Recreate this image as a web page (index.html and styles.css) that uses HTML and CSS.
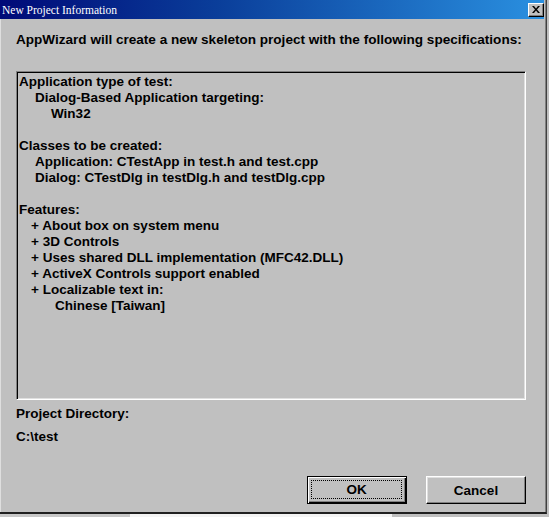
FILE: index.html
```html
<!DOCTYPE html>
<html>
<head>
<meta charset="utf-8">
<link rel="stylesheet" href="styles.css">
</head>
<body>
<div class="window">
  <div class="titlebar">
    <span class="title">New Project Information</span>
    <span class="close"><svg width="8" height="7" viewBox="0 0 8 7"><path d="M0 0h2l2 2.5L6 0h2L5 3.5 8 7H6L4 4.5 2 7H0l3-3.5z" fill="#000"/></svg></span>
  </div>
  <div class="content">
    <p class="heading">AppWizard will create a new skeleton project with the following specifications:</p>
    <div class="listbox">
      <div class="l0">Application type of test:</div>
      <div class="l1">Dialog-Based Application targeting:</div>
      <div class="l2">Win32</div>
      <div class="blank"></div>
      <div class="l0">Classes to be created:</div>
      <div class="l1">Application: CTestApp in test.h and test.cpp</div>
      <div class="l1">Dialog: CTestDlg in testDlg.h and testDlg.cpp</div>
      <div class="blank"></div>
      <div class="l0">Features:</div>
      <div class="lp">+ About box on system menu</div>
      <div class="lp">+ 3D Controls</div>
      <div class="lp">+ Uses shared DLL implementation (MFC42.DLL)</div>
      <div class="lp">+ ActiveX Controls support enabled</div>
      <div class="lp">+ Localizable text in:</div>
      <div class="l3">Chinese [Taiwan]</div>
    </div>
    <div class="label dir-label">Project Directory:</div>
    <div class="label dir-value">C:\test</div>
    <div class="buttons">
      <button class="btn default"><span class="focus">OK</span></button>
      <button class="btn">Cancel</button>
    </div>
  </div>
</div>
<div class="behind">
  <span class="b1"></span><span class="b2"></span><span class="b3"></span>
</div>
</body>
</html>
```

FILE: styles.css
```css
html, body {
  margin: 0;
  padding: 0;
  background: #c0c0c0;
  width: 549px;
  height: 517px;
  overflow: hidden;
}
.window {
  width: 546px;
  height: 512px;
  background: #c0c0c0;
  border-right: 1px solid #404040;
  border-bottom: 2px solid #202020;
  display: flex;
  flex-direction: column;
  box-shadow: inset -1px 0 0 #808080, inset 1px 0 0 #dfdfdf;
  font-family: "Liberation Sans", Arial, sans-serif;
  font-weight: bold;
  font-size: 13.5px;
  color: #000;
}
.titlebar {
  height: 19px;
  margin-right: 2px;
  display: flex;
  align-items: center;
  justify-content: space-between;
  padding: 0 0 0 2px;
  background: linear-gradient(to right, #000a78 0%, #0a3e9a 40%, #2a90e0 100%);
}
.title {
  font-family: "Liberation Serif", "Times New Roman", serif;
  font-weight: normal;
  font-size: 11.5px;
  color: #fff;
}
.close {
  width: 16px;
  height: 14px;
  box-sizing: border-box;
  background: #c0c0c0;
  border-top: 1px solid #fff;
  border-left: 1px solid #fff;
  border-right: 1px solid #000;
  border-bottom: 1px solid #000;
  box-shadow: inset -1px -1px 0 #808080;
  display: flex;
  align-items: center;
  justify-content: center;
}
.content {
  flex: 1;
  display: flex;
  flex-direction: column;
  padding: 0 18px 0 16px;
}
.heading {
  margin: 13px 0 0 0;
  line-height: 16px;
  font-size: 13.55px;
  white-space: nowrap;
}
.listbox {
  margin-top: 23px;
  width: 510px;
  height: 329px;
  box-sizing: border-box;
  border-top: 1px solid #808080;
  border-left: 1px solid #808080;
  border-right: 1px solid #fff;
  border-bottom: 1px solid #fff;
  box-shadow: inset 1px 1px 0 #000, inset -1px -1px 0 #dfdfdf;
  padding: 2px 2px 2px 2px;
  line-height: 16px;
}
.blank { height: 16px; }
.l1 { padding-left: 16px; }
.l2 { padding-left: 32px; }
.lp { padding-left: 12px; }
.l3 { padding-left: 36px; }
.label {
  line-height: 16px;
}
.dir-label { margin-top: 6px; }
.dir-value { margin-top: 7px; }
.buttons {
  margin-top: auto;
  margin-bottom: 8px;
  margin-right: 2px;
  display: flex;
  justify-content: flex-end;
  gap: 19px;
}
.btn {
  width: 100px;
  height: 28px;
  box-sizing: border-box;
  background: #c0c0c0;
  font-family: "Liberation Sans", Arial, sans-serif;
  font-weight: bold;
  font-size: 13.5px;
  color: #000;
  padding: 0;
  border-top: 1px solid #fff;
  border-left: 1px solid #fff;
  border-right: 1px solid #000;
  border-bottom: 1px solid #000;
  box-shadow: inset -1px -1px 0 #808080, inset 1px 1px 0 #dfdfdf;
  display: flex;
  align-items: center;
  justify-content: center;
}
.btn.default {
  border: 1px solid #000;
  box-shadow: inset 1px 1px 0 #fff, inset -1px -1px 0 #000, inset -2px -2px 0 #808080;
  padding: 3px 4px 4px 3px;
}
.focus {
  flex: 1;
  align-self: stretch;
  display: flex;
  align-items: center;
  justify-content: center;
  border: 1px dotted #000;
}
.behind {
  display: flex;
  height: 3px;
}
.b1 { width: 130px; background: #c8c8c8; }
.b2 { width: 262px; background: #f4f4f4; }
.b3 { flex: 1; background: #c0c0c0; }
```
